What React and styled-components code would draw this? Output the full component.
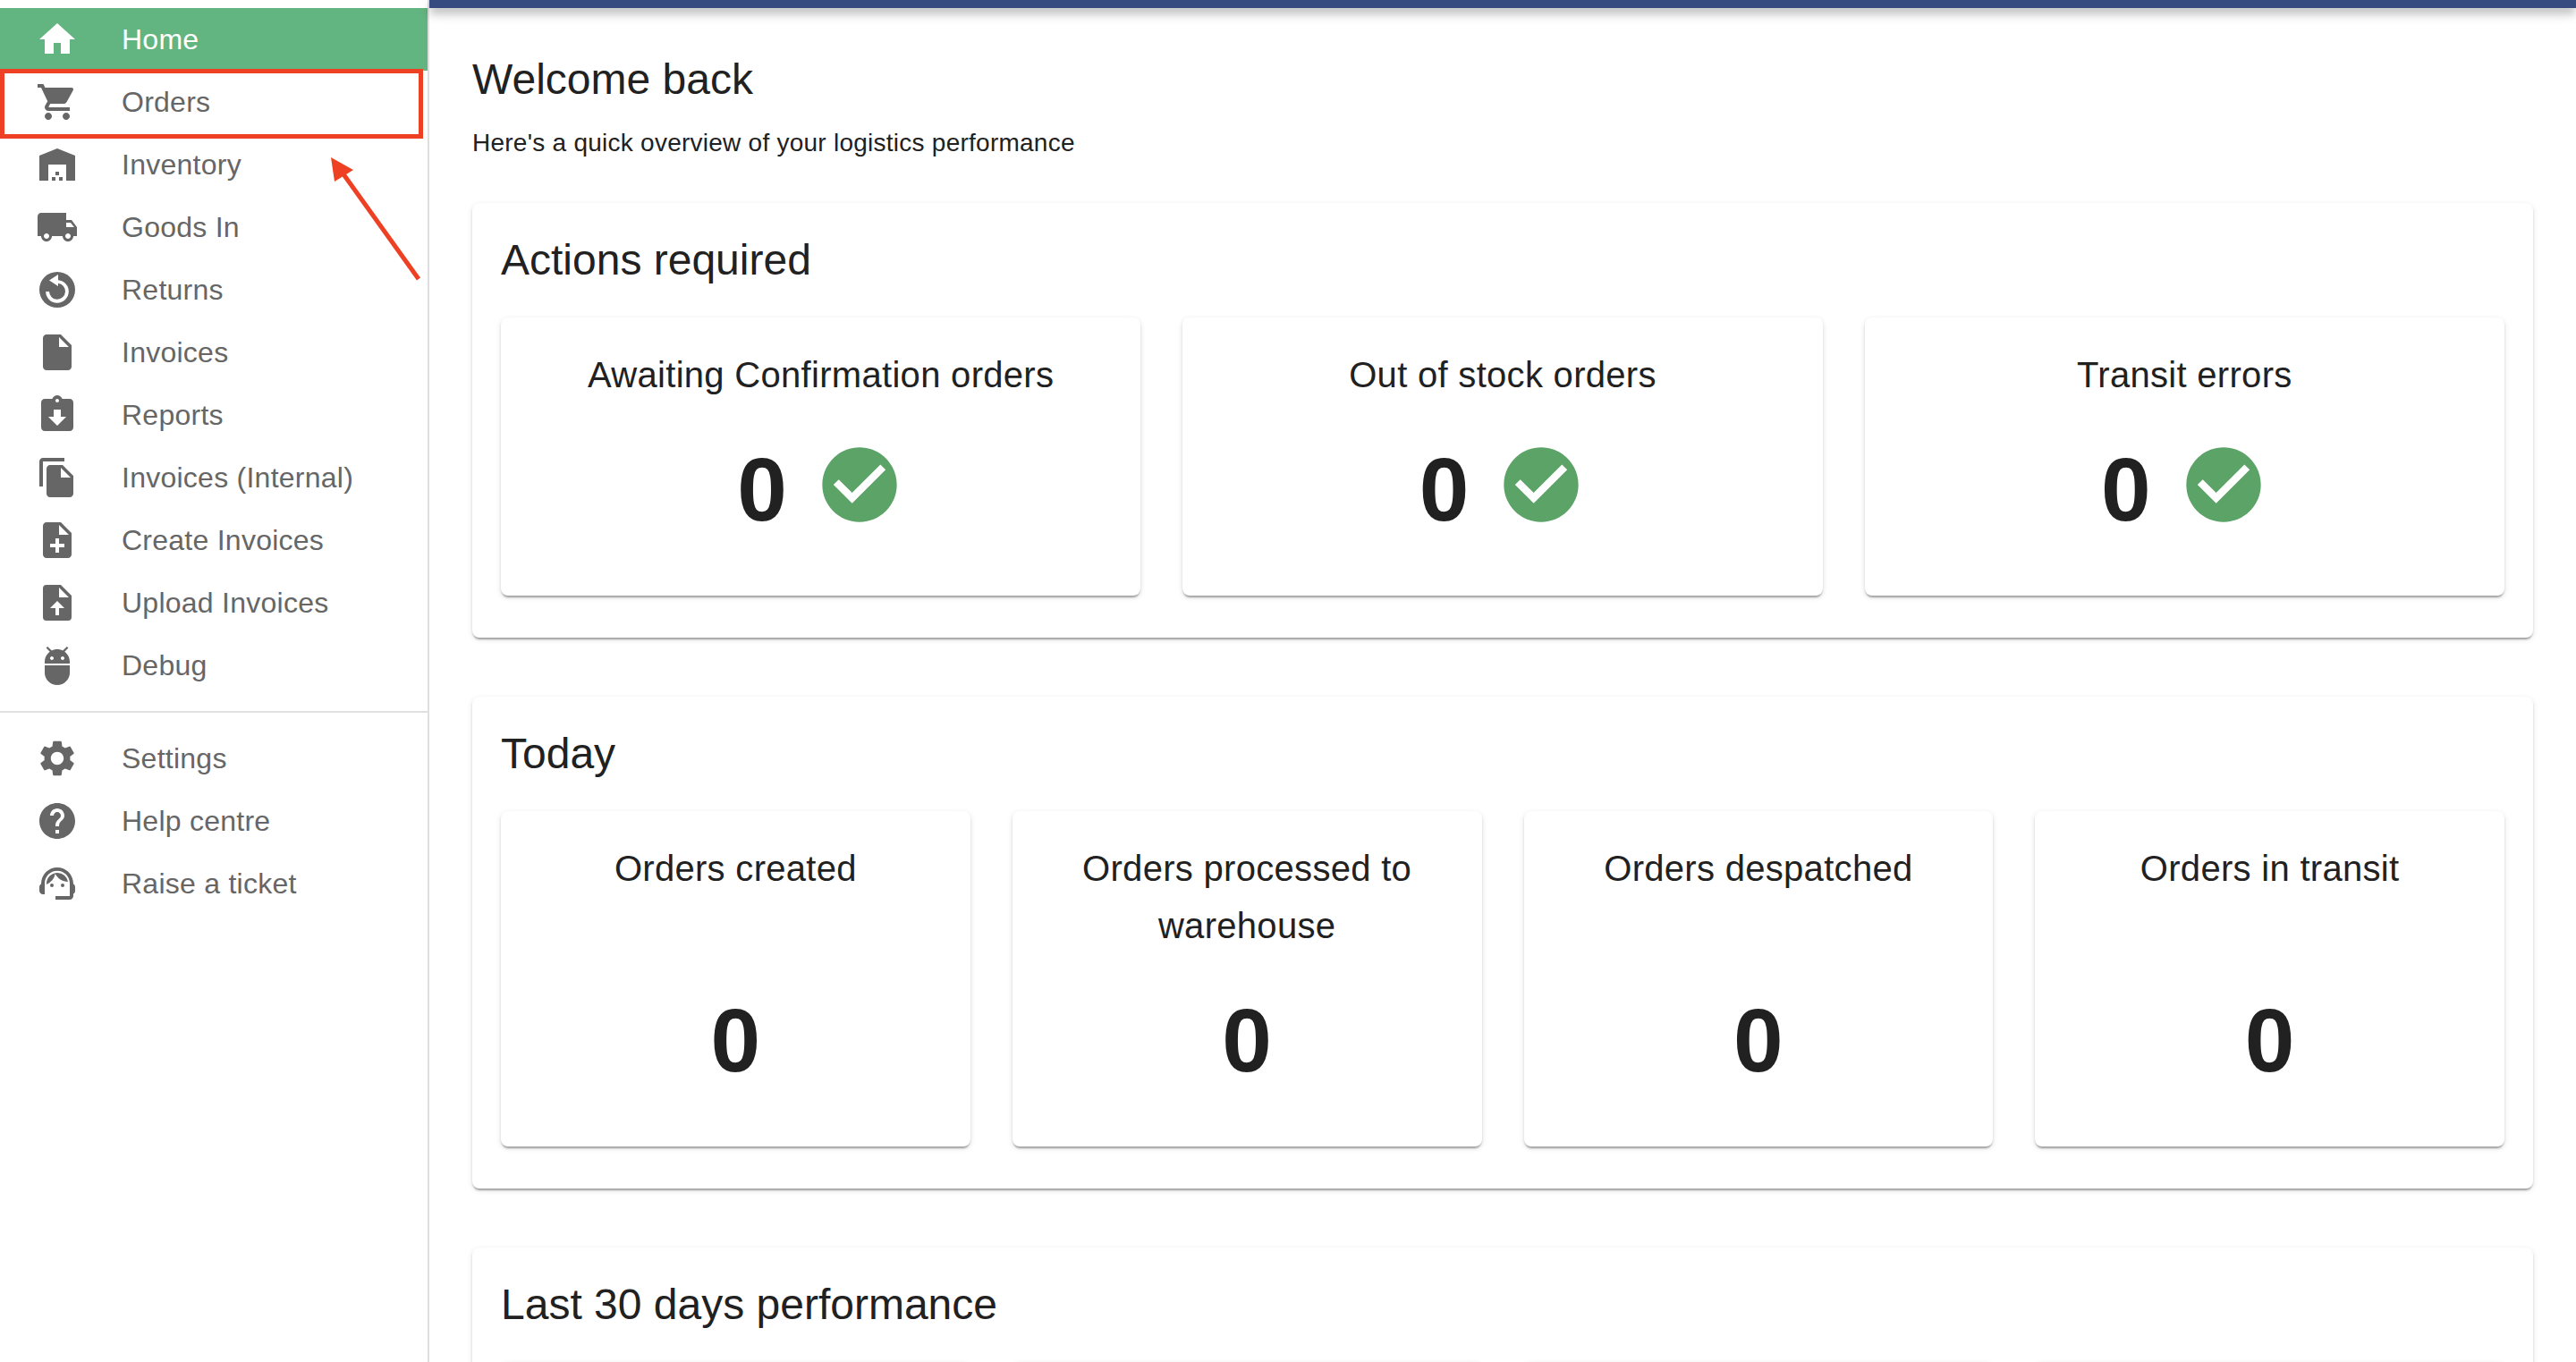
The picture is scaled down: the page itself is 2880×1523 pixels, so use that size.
import React from "react";
import styled, { createGlobalStyle } from "styled-components";
import {
  MdHome, MdShoppingCart, MdWarehouse, MdLocalShipping, MdInsertDriveFile, MdAssignmentReturned,
  MdFileCopy, MdNoteAdd, MdAdb, MdSettings, MdHelp, MdSupportAgent, MdCheckCircle,
} from "react-icons/md";

const Global = createGlobalStyle`
  html, body { margin: 0; padding: 0; height: 1523px; overflow: hidden; background: #fff; }
  body { font-family: "Liberation Sans", Arial, sans-serif; color: #212121; }
  * { box-sizing: border-box; }
`;

const cardShadow = "0 4px 2px -2px rgba(0,0,0,.2), 0 2px 2px 0 rgba(0,0,0,.14), 0 2px 6px 0 rgba(0,0,0,.12)";

const Page = styled.div`display: flex; width: 2880px; height: 1523px; overflow: hidden;`;
const Sidebar = styled.nav`
  position: relative; flex: 0 0 480px; height: 100%; padding-top: 9px; border-right: 2px solid #dfdfdf;
`;
const NavGroup = styled.div`display: flex; flex-direction: column;`;
const Row = styled.div`
  display: flex; align-items: center; height: 70px; padding-left: 40px; font-size: 32px; letter-spacing: .25px;
  background: ${p => (p.$active ? "#62b580" : "transparent")};
  color: ${p => (p.$active ? "#fff" : "#666")};
`;
const IconSlot = styled.span`
  flex: 0 0 96px; display: flex; align-items: center;
  svg { width: 48px; height: 48px; display: block; fill: currentColor; }
`;
const Divider = styled.hr`margin: 16px 0; border: 0; height: 2px; background: #e0e0e0;`;
const Highlight = styled.div`
  position: absolute; left: 0; top: 77px; width: 473px; height: 78px; border: 5px solid #ee4023;
`;
const Arrow = styled.svg`position: absolute; left: 360px; top: 170px; width: 120px; height: 150px;`;

const Main = styled.main`flex: 1; min-width: 0; display: flex; flex-direction: column;`;
const TopBar = styled.div`
  flex: 0 0 9px; position: relative; background: #364c80;
  box-shadow: 0 4px 8px -2px rgba(0,0,0,.2), 0 8px 10px 0 rgba(0,0,0,.14), 0 2px 20px 0 rgba(0,0,0,.12);
`;
const Content = styled.div`flex: 0 0 auto; padding: 0 48px; display: flex; flex-direction: column;`;
const Title = styled.h1`margin: 52px 0 0; font-size: 48px; line-height: 56px; font-weight: 400;`;
const Sub = styled.p`margin: 22px 0 0; font-size: 28px; line-height: 42px; font-weight: 400; letter-spacing: .25px;`;
const Section = styled.section`
  margin-top: ${p => (p.$first ? "46px" : "66px")}; padding: 32px 32px 47px; background: #fff; border-radius: 8px;
  box-shadow: ${cardShadow};
`;
const Heading = styled.h2`margin: 0; font-size: 48px; line-height: 64px; font-weight: 400;`;
const Grid = styled.div`
  display: grid; grid-template-columns: repeat(${p => p.$cols}, 1fr); gap: 47px; margin-top: 32px;
`;
const Card = styled.div`
  padding: 32px; background: #fff; border-radius: 8px; text-align: center; box-shadow: ${cardShadow};
`;
const Label = styled.div`
  font-size: 40px; line-height: 64px; letter-spacing: .3px; min-height: ${p => p.$lines * 64}px;
`;
const Value = styled.div`
  display: flex; align-items: center; justify-content: center; gap: 31px; height: 183px; padding-top: 8px;
`;
const Zero = styled.span`font-size: 100px; line-height: 1; font-weight: 700;`;
const Check = styled(MdCheckCircle)`width: 100px; height: 100px; fill: #5ca368; margin-top: -10px;`;

const ReturnsIcon = () => (
  <svg viewBox="0 0 24 24">
    <circle cx="12" cy="12" r="10" />
    <path d="M12.5 6.6V3.5L7.5 6.8l5 3.2V8.4a4.5 4.5 0 1 1-5 4.6H5.6A6.4 6.4 0 1 0 12.5 6.6z" fill="#fff" />
  </svg>
);
const UploadIcon = () => (
  <svg viewBox="0 0 24 24">
    <path
      fillRule="evenodd"
      d="M14 2H6a2 2 0 0 0-2 2v16a2 2 0 0 0 2 2h12a2 2 0 0 0 2-2V8l-6-6zM13 9V3.5L18.5 9H13zM11 19v-4H8l4-4 4 4h-3v4h-2z"
    />
  </svg>
);

const topItems = [
  ["Home", MdHome], ["Orders", MdShoppingCart], ["Inventory", MdWarehouse], ["Goods In", MdLocalShipping],
  ["Returns", ReturnsIcon], ["Invoices", MdInsertDriveFile], ["Reports", MdAssignmentReturned],
  ["Invoices (Internal)", MdFileCopy], ["Create Invoices", MdNoteAdd], ["Upload Invoices", UploadIcon],
  ["Debug", MdAdb],
];
const bottomItems = [["Settings", MdSettings], ["Help centre", MdHelp], ["Raise a ticket", MdSupportAgent]];

const NavRow = ({ label, Icon, active }) => (
  <Row $active={active}><IconSlot><Icon /></IconSlot>{label}</Row>
);

export default function App() {
  return (
    <Page>
      <Global />
      <Sidebar>
        <NavGroup>
          {topItems.map(([l, I], i) => <NavRow key={l} label={l} Icon={I} active={i === 0} />)}
        </NavGroup>
        <Divider />
        <NavGroup>
          {bottomItems.map(([l, I]) => <NavRow key={l} label={l} Icon={I} />)}
        </NavGroup>
        <Highlight />
        <Arrow viewBox="0 0 120 150">
          <path d="M108 142 L22 22" stroke="#ee4023" strokeWidth="5" fill="none" />
          <path d="M10 6 L35 20 L14 33 Z" fill="#ee4023" />
        </Arrow>
      </Sidebar>
      <Main>
        <TopBar />
        <Content>
          <Title>Welcome back</Title>
          <Sub>Here's a quick overview of your logistics performance</Sub>
          <Section $first>
            <Heading>Actions required</Heading>
            <Grid $cols={3}>
              {["Awaiting Confirmation orders", "Out of stock orders", "Transit errors"].map(t => (
                <Card key={t}>
                  <Label $lines={1}>{t}</Label>
                  <Value><Zero>0</Zero><Check /></Value>
                </Card>
              ))}
            </Grid>
          </Section>
          <Section>
            <Heading>Today</Heading>
            <Grid $cols={4}>
              {["Orders created", "Orders processed to warehouse", "Orders despatched", "Orders in transit"].map(t => (
                <Card key={t}>
                  <Label $lines={2}>{t}</Label>
                  <Value><Zero>0</Zero></Value>
                </Card>
              ))}
            </Grid>
          </Section>
          <Section>
            <Heading>Last 30 days performance</Heading>
            <Grid $cols={4}><Card /><Card /><Card /><Card /></Grid>
          </Section>
        </Content>
      </Main>
    </Page>
  );
}
